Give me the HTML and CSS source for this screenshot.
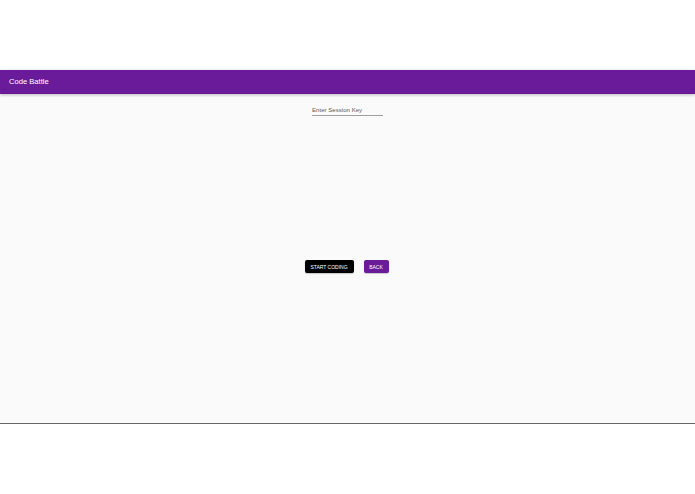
FILE: index.html
```html
<!DOCTYPE html>
<html>
<head>
<meta charset="utf-8">
<link rel="stylesheet" href="styles.css">
</head>
<body>
<div class="top-space"></div>
<header class="toolbar">Code Battle</header>
<main class="content">
  <div class="field">
    <input class="field-input" type="text" placeholder="Enter Session Key">
  </div>
  <div class="actions">
    <button class="btn btn-dark">START CODING</button>
    <button class="btn btn-purple">BACK</button>
  </div>
</main>
</body>
</html>
```
FILE: styles.css
```css
html, body {
  margin: 0;
  padding: 0;
  background: #ffffff;
  font-family: "Liberation Sans", Arial, sans-serif;
}
.top-space {
  height: 70px;
}
.toolbar {
  height: 24px;
  background: #6a1b9a;
  color: #ffffff;
  font-size: 7.6px;
  line-height: 24px;
  padding-left: 9px;
  box-shadow: 0 1px 3px rgba(0,0,0,0.25);
  position: relative;
  z-index: 1;
}
.content {
  height: 329px;
  background: #fafafa;
  border-bottom: 1px solid #666666;
  display: flex;
  flex-direction: column;
  align-items: center;
}
.field {
  margin-top: 12px;
  width: 71px;
  border-bottom: 1px solid #9e9e9e;
}
.field-input {
  display: block;
  width: 100%;
  box-sizing: border-box;
  border: none;
  background: transparent;
  outline: none;
  padding: 0 0 2px 0;
  font-family: "Liberation Sans", Arial, sans-serif;
  font-size: 6.1px;
  height: 9px;
  color: #333;
}
.field-input::placeholder {
  color: #616161;
}
.actions {
  margin-top: 144px;
  margin-right: 2px;
  display: flex;
  gap: 10px;
}
.btn {
  height: 13px;
  border: none;
  border-radius: 2px;
  color: #ffffff;
  font-family: "Liberation Sans", Arial, sans-serif;
  font-size: 5px;
  padding: 0;
  box-shadow: 0 1px 1px rgba(0,0,0,0.2);
}
.btn-dark {
  background: #000000;
  width: 49px;
}
.btn-purple {
  background: #6a1b9a;
  width: 25px;
}
```
